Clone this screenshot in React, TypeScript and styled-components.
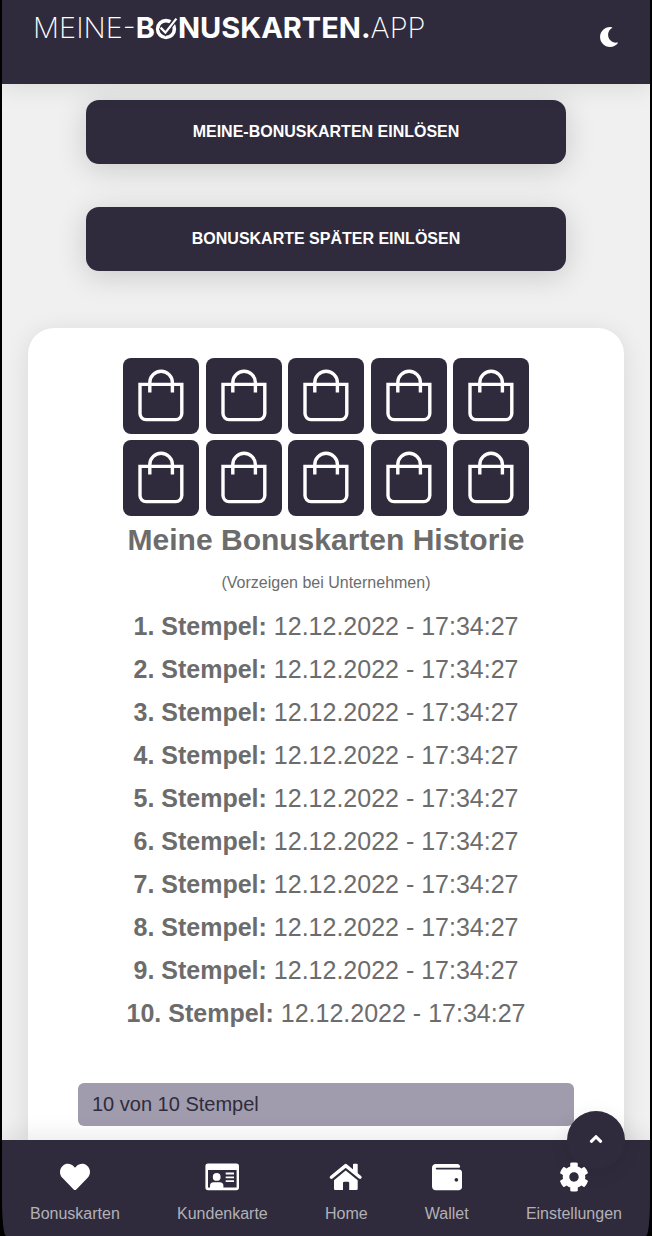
import React from 'react';
import styled, { createGlobalStyle } from 'styled-components';
import { FaAngleUp, FaCog, FaHeart, FaMoon, FaWallet } from 'react-icons/fa';

const dark = '#2f2b3c';

const GlobalStyle = createGlobalStyle`
  * { box-sizing: border-box; }
  body {
    margin: 0;
    background: #000;
    font-family: "Liberation Sans", Arial, sans-serif;
    color: #6c6c6c;
  }
`;

const Screen = styled.div`
  display: flex;
  flex-direction: column;
  min-height: 100vh;
  margin: 0 2px;
  overflow: clip;
`;

const Header = styled.header`
  position: sticky;
  top: 0;
  z-index: 2;
  display: flex;
  justify-content: space-between;
  align-items: flex-start;
  height: 84px;
  padding: 10px 31px 0 31px;
  background: ${dark};
  box-shadow: 0 4px 24px rgba(0, 0, 0, 0.09);
`;

const Logo = styled.a`
  display: flex;
  align-items: center;
  height: 36px;
  color: #fff;
  font-family: Inter, "Open Sans", sans-serif;
  font-size: 29px;
  line-height: 36px;
  text-decoration: none;
`;

const LogoThin = styled.span`
  font-weight: 200;
`;

const LogoBold = styled.strong`
  display: flex;
  align-items: center;
  font-weight: 700;
`;

const ThemeButton = styled.button`
  display: flex;
  margin: 17px 0 0;
  padding: 0;
  border: 0;
  background: none;
  color: #fff;
  font-size: 20px;
`;

const Main = styled.main`
  display: flex;
  flex: 1;
  flex-direction: column;
  padding: 16px 26px 0;
  background: #f0f0f0;
`;

const Actions = styled.div`
  display: flex;
  flex-direction: column;
  gap: 43px;
  padding: 0 58px;
`;

const ActionButton = styled.button`
  height: 64px;
  padding: 0 16px 1px;
  border: 0;
  border-radius: 13px;
  background: ${dark};
  color: #fff;
  font-family: inherit;
  font-size: 16px;
  font-weight: 700;
  text-transform: uppercase;
  box-shadow: 0 5px 30px rgba(0, 0, 0, 0.16);
`;

const Card = styled.section`
  display: flex;
  flex: 1;
  flex-direction: column;
  margin-top: 57px;
  padding: 30px 50px 14px;
  border-radius: 26px 26px 0 0;
  background: #fff;
  box-shadow: 0 4px 24px rgba(0, 0, 0, 0.1);
`;

const Stamps = styled.div`
  display: grid;
  grid-template-columns: repeat(5, 76px);
  justify-content: space-between;
  row-gap: 6px;
  width: 406px;
  margin: 0 auto;
`;

const Stamp = styled.div`
  height: 76px;
  border-radius: 8px;
  background: ${dark};
`;

const Title = styled.h1`
  margin: 6px 0 0;
  font-size: 30px;
  line-height: 36px;
  text-align: center;
`;

const Hint = styled.p`
  margin: 15px 0 12px;
  font-size: 16px;
  line-height: 20px;
  text-align: center;
`;

const History = styled.ul`
  margin: 0;
  padding: 0;
  list-style: none;
  font-size: 25px;
  line-height: 43px;
  text-align: center;
`;

const Progress = styled.div`
  margin-top: 48px;
  padding: 0 14px;
  border-radius: 6px;
  background: #a09cad;
  color: ${dark};
  font-size: 20px;
  line-height: 43px;
`;

const Footer = styled.footer`
  position: sticky;
  bottom: 0;
  z-index: 2;
  background: ${dark};
  border-radius: 0 0 4px 4px / 0 0 36px 36px;
  box-shadow: 0 -4px 24px rgba(0, 0, 0, 0.09);
`;

const TopButton = styled.button`
  position: absolute;
  top: -29px;
  right: 25px;
  display: flex;
  align-items: center;
  justify-content: center;
  width: 58px;
  height: 58px;
  padding: 0 0 2px;
  border: 0;
  border-radius: 50%;
  background: ${dark};
  color: #fff;
  font-size: 20px;
  box-shadow: 0 4px 20px rgba(0, 0, 0, 0.08);
`;

const Tabs = styled.nav`
  position: relative;
  display: flex;
  justify-content: space-between;
  padding: 22px 28px 12px;
`;

const Tab = styled.a`
  display: flex;
  flex-direction: column;
  align-items: center;
  gap: 12px;
  color: #b3b1b8;
  font-size: 16px;
  line-height: 20px;
  text-decoration: none;

  svg {
    height: 30px;
    color: #fff;
  }
`;

const CheckO = () => (
  <svg width="23" height="23" viewBox="0 0 23 23" fill="none" stroke="#fff" role="img" aria-label="O">
    <circle cx="11" cy="12" r="8.4" strokeWidth="3.6" />
    <path d="M5.6 10.6l4.8 5L20.6 2" stroke={dark} strokeWidth="5" />
    <path d="M5.6 10.6l4.8 5L21.4 1.6" strokeWidth="2.3" />
  </svg>
);

const Bag = () => (
  <svg width="76" height="76" viewBox="0 0 76 76" fill="none" stroke="#fff" strokeWidth="3.4" aria-hidden="true">
    <path d="M17 26.4H58.8V55.6a6 6 0 0 1-6 6H23a6 6 0 0 1-6-6Z" />
    <path d="M26.8 34.6V24.6a11.3 11.3 0 0 1 22.6 0V34.6" />
  </svg>
);

const IdCard = () => (
  <svg width="34" height="30" viewBox="0 0 34 30" fill="currentColor" aria-hidden="true">
    <path
      fillRule="evenodd"
      d="M3 1.6H31.4A2.6 2.6 0 0 1 34 4.2V25.6A2.6 2.6 0 0 1 31.4 28.2H3A2.6 2.6 0 0 1 .4 25.6V4.2A2.6 2.6 0 0 1 3 1.6ZM3 8V25.5H31.6V8Z"
    />
    <circle cx="11.7" cy="14.9" r="3.9" />
    <path d="M5 26v-2.2a3.6 3.6 0 0 1 3.6-3.6h6.2a3.6 3.6 0 0 1 3.6 3.6V26Z" />
    <path d="M20.7 10.6H29v1.8H20.7ZM20.7 14.4H29v1.8H20.7ZM20.7 18.2H29V20H20.7Z" />
  </svg>
);

const House = () => (
  <svg width="34" height="30" viewBox="0 0 34 30" fill="currentColor" aria-hidden="true">
    <path d="M2.4 15.2L16.7 3.6L31 15.2" fill="none" stroke="currentColor" strokeWidth="3.4" strokeLinecap="round" strokeLinejoin="round" />
    <path d="M24 2.6a.9.9 0 0 1 .9-.9h2.9a.9.9 0 0 1 .9.9V13L24 9.2Z" />
    <path d="M16.7 8.6L28.7 18.2V26.8a1.3 1.3 0 0 1-1.3 1.3H20.2V21a1.2 1.2 0 0 0-1.2-1.2H15.2A1.2 1.2 0 0 0 14 21V28.1H6.3A1.3 1.3 0 0 1 5 26.8V18.2Z" />
  </svg>
);

const stamps = Array.from({ length: 10 }, (_, i) => ({ number: i + 1, time: '12.12.2022 - 17:34:27' }));

const tabs = [
  { label: 'Bonuskarten', icon: <FaHeart size={30} /> },
  { label: 'Kundenkarte', icon: <IdCard /> },
  { label: 'Home', icon: <House /> },
  { label: 'Wallet', icon: <FaWallet size={30} /> },
  { label: 'Einstellungen', icon: <FaCog size={30} /> },
];

export default function App() {
  return (
    <>
      <GlobalStyle />
      <Screen>
        <Header>
          <Logo href="#">
            <LogoThin>MEINE-</LogoThin>
            <LogoBold>B<CheckO />NUSKARTEN.</LogoBold>
            <LogoThin>APP</LogoThin>
          </Logo>
          <ThemeButton aria-label="Dunkelmodus"><FaMoon /></ThemeButton>
        </Header>
        <Main>
          <Actions>
            <ActionButton>Meine-Bonuskarten einlösen</ActionButton>
            <ActionButton>Bonuskarte später einlösen</ActionButton>
          </Actions>
          <Card>
            <Stamps>
              {stamps.map((s) => <Stamp key={s.number}><Bag /></Stamp>)}
            </Stamps>
            <Title>Meine Bonuskarten Historie</Title>
            <Hint>(Vorzeigen bei Unternehmen)</Hint>
            <History>
              {stamps.map((s) => (
                <li key={s.number}><strong>{s.number}. Stempel:</strong> {s.time}</li>
              ))}
            </History>
            <Progress>10 von 10 Stempel</Progress>
          </Card>
        </Main>
        <Footer>
          <TopButton aria-label="Nach oben"><FaAngleUp /></TopButton>
          <Tabs>
            {tabs.map(({ label, icon }) => (
              <Tab key={label} href="#">{icon}{label}</Tab>
            ))}
          </Tabs>
        </Footer>
      </Screen>
    </>
  );
}
